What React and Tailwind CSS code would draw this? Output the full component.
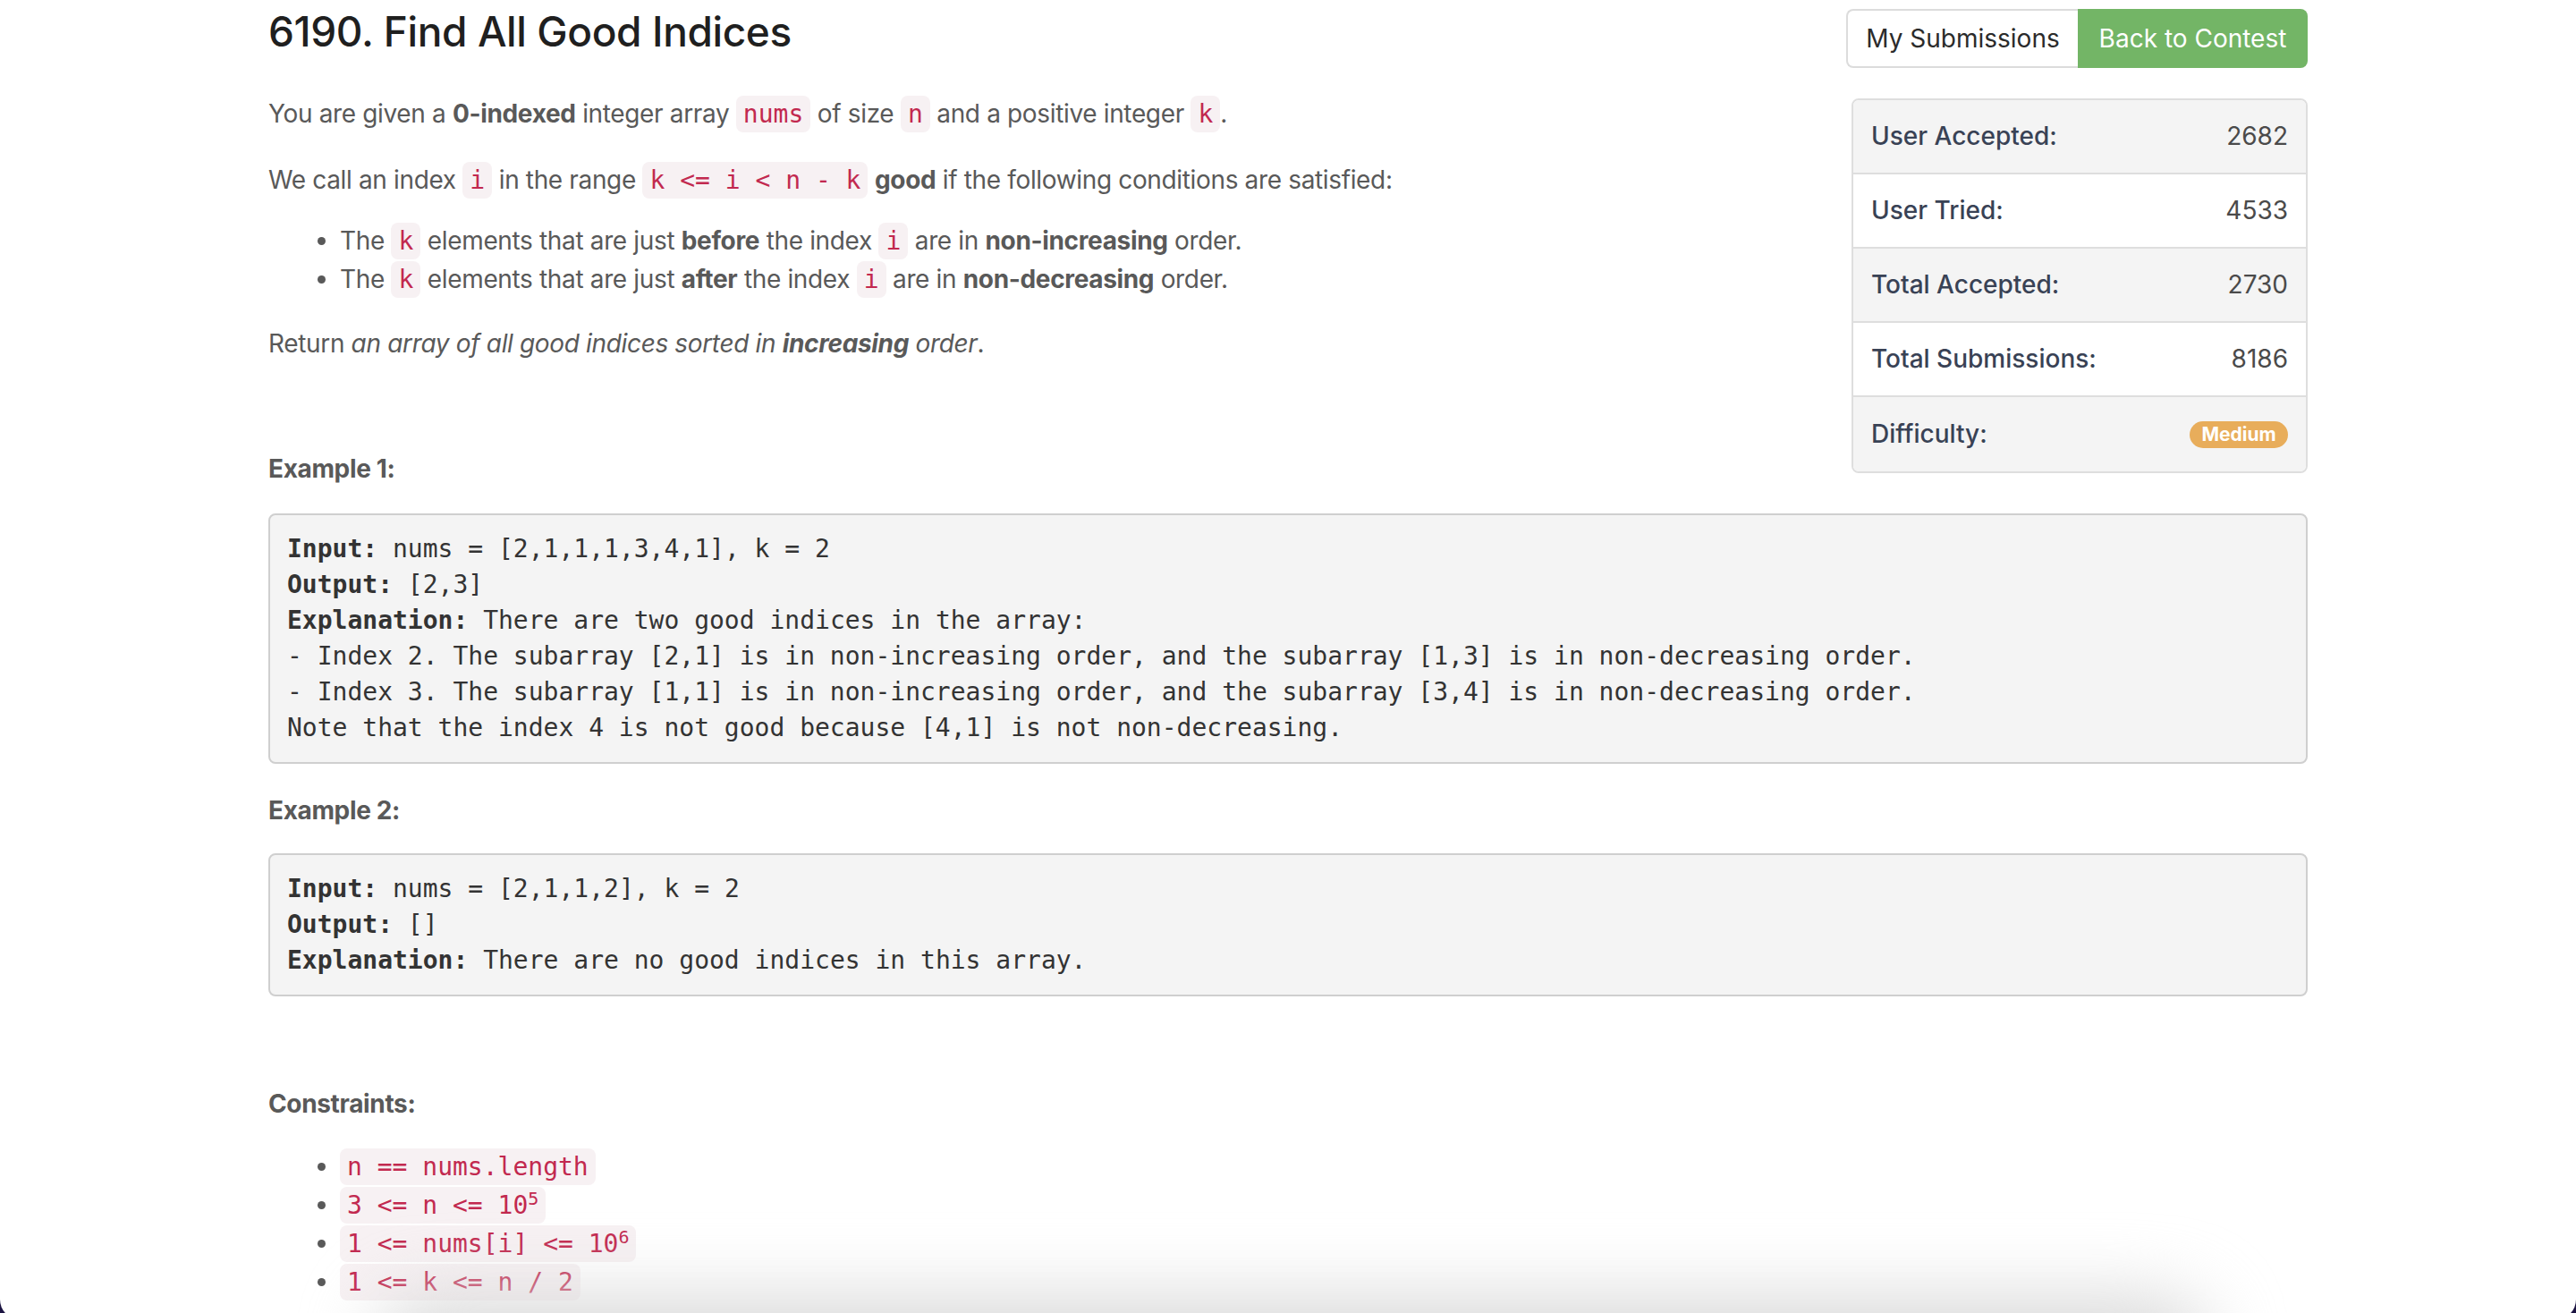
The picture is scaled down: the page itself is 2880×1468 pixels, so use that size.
const sans = "font-[family-name:Inter,'Noto_Sans',sans-serif]";
const mono = "font-[family-name:'DejaVu_Sans_Mono','Liberation_Mono',monospace]";

function C({ children }) {
  return (
    <code className={`${mono} tracking-normal text-[28px] text-[#c2294f] bg-[#f7f1f3] px-[8px] py-[4px] rounded-lg`}>
      {children}
    </code>
  );
}

function StatRow({ label, value, gray, last }) {
  return (
    <div
      className={`flex items-center justify-between h-[83px] px-[20px] ${gray ? "bg-[#f4f4f4]" : "bg-white"} ${last ? "" : "border-b-2 border-[#dedede]"}`}
    >
      <span className="text-[28px] font-medium text-[#394255]">{label}</span>
      {value}
    </div>
  );
}

export default function App() {
  return (
    <div className="w-[2880px] h-[1468px] overflow-hidden bg-[#1c1442]">
      <div className={`relative w-full h-[1475px] bg-white rounded-b-[22px] overflow-hidden ${sans}`}>
        <div className="w-[2280px] mx-auto pt-[9px]">
          {/* header */}
          <div className="flex justify-between items-start">
            <h1 className="mt-[1px] text-[46px] leading-[1.1] font-medium text-[#1f1f1f] tracking-[-0.4px]">
              6190. Find All Good Indices
            </h1>
            <div className="flex h-[66px] mt-[1px]">
              <div className="w-[259px] flex items-center justify-center border-2 border-r-0 border-[#dcdcdc] rounded-l-lg text-[28px] text-[#2b2b2b]">
                My Submissions
              </div>
              <div className="w-[257px] flex items-center justify-center bg-[#73b566] rounded-r-lg text-[28px] text-white">
                Back to Contest
              </div>
            </div>
          </div>

          {/* body */}
          <div className="mt-[30px] text-[28px] leading-[43px] text-[#595959] tracking-[-0.35px]">
            <div className="float-right mt-[4px] w-[510px] border-2 border-[#dedede] rounded-lg overflow-hidden tracking-normal">
              <StatRow gray label="User Accepted:" value={<span className="text-[28px] text-[#4a4a4a]">2682</span>} />
              <StatRow label="User Tried:" value={<span className="text-[28px] text-[#4a4a4a]">4533</span>} />
              <StatRow gray label="Total Accepted:" value={<span className="text-[28px] text-[#4a4a4a]">2730</span>} />
              <StatRow label="Total Submissions:" value={<span className="text-[28px] text-[#4a4a4a]">8186</span>} />
              <StatRow
                gray
                last
                label="Difficulty:"
                value={
                  <span className="h-[30px] w-[110px] flex items-center justify-center rounded-full bg-[#e8ad5b] text-white text-[21px] font-bold leading-none">
                    Medium
                  </span>
                }
              />
            </div>

            <p>
              You are given a <strong>0-indexed</strong> integer array <C>nums</C> of size <C>n</C> and a positive
              integer <C>k</C>.
            </p>
            <p className="mt-[31px]">
              We call an index <C>i</C> in the range <C>k &lt;= i &lt; n - k</C> <strong>good</strong> if the
              following conditions are satisfied:
            </p>
            <ul className="mt-[25px] list-disc pl-[80px]">
              <li>
                The <C>k</C> elements that are just <strong>before</strong> the index <C>i</C> are in{" "}
                <strong>non-increasing</strong> order.
              </li>
              <li>
                The <C>k</C> elements that are just <strong>after</strong> the index <C>i</C> are in{" "}
                <strong>non-decreasing</strong> order.
              </li>
            </ul>
            <p className="mt-[29px]">
              Return <em>an array of all good indices sorted in <strong>increasing</strong> order</em>.
            </p>

            <p className="mt-[97px] font-bold">Example 1:</p>
            <pre
              className={`mt-[28px] clear-both ${mono} tracking-normal text-[28px] leading-[40px] text-[#333] bg-[#f4f4f4] border-2 border-[#cfcfcf] rounded-lg px-[19px] py-[18px]`}
            >
              <strong>Input:</strong> nums = [2,1,1,1,3,4,1], k = 2{"\n"}
              <strong>Output:</strong> [2,3]{"\n"}
              <strong>Explanation:</strong> There are two good indices in the array:{"\n"}
              - Index 2. The subarray [2,1] is in non-increasing order, and the subarray [1,3] is in non-decreasing order.{"\n"}
              - Index 3. The subarray [1,1] is in non-increasing order, and the subarray [3,4] is in non-decreasing order.{"\n"}
              Note that the index 4 is not good because [4,1] is not non-decreasing.
            </pre>

            <p className="mt-[31px] font-bold">Example 2:</p>
            <pre
              className={`mt-[26px] ${mono} tracking-normal text-[28px] leading-[40px] text-[#333] bg-[#f4f4f4] border-2 border-[#cfcfcf] rounded-lg px-[19px] py-[18px]`}
            >
              <strong>Input:</strong> nums = [2,1,1,2], k = 2{"\n"}
              <strong>Output:</strong> []{"\n"}
              <strong>Explanation:</strong> There are no good indices in this array.
            </pre>

            <p className="mt-[99px] font-bold">Constraints:</p>
            <ul className="mt-[27px] list-disc pl-[80px]">
              <li>
                <C>n == nums.length</C>
              </li>
              <li>
                <C>
                  3 &lt;= n &lt;= 10<sup className="text-[20px] leading-none">5</sup>
                </C>
              </li>
              <li>
                <C>
                  1 &lt;= nums[i] &lt;= 10<sup className="text-[20px] leading-none">6</sup>
                </C>
              </li>
              <li>
                <C>1 &lt;= k &lt;= n / 2</C>
              </li>
            </ul>
          </div>
        </div>

        {/* bottom shade */}
        <div className="absolute left-[420px] w-[2050px] top-[1450px] h-[120px] bg-[#d9d9d9] rounded-full blur-[40px] pointer-events-none" />
      </div>
    </div>
  );
}
